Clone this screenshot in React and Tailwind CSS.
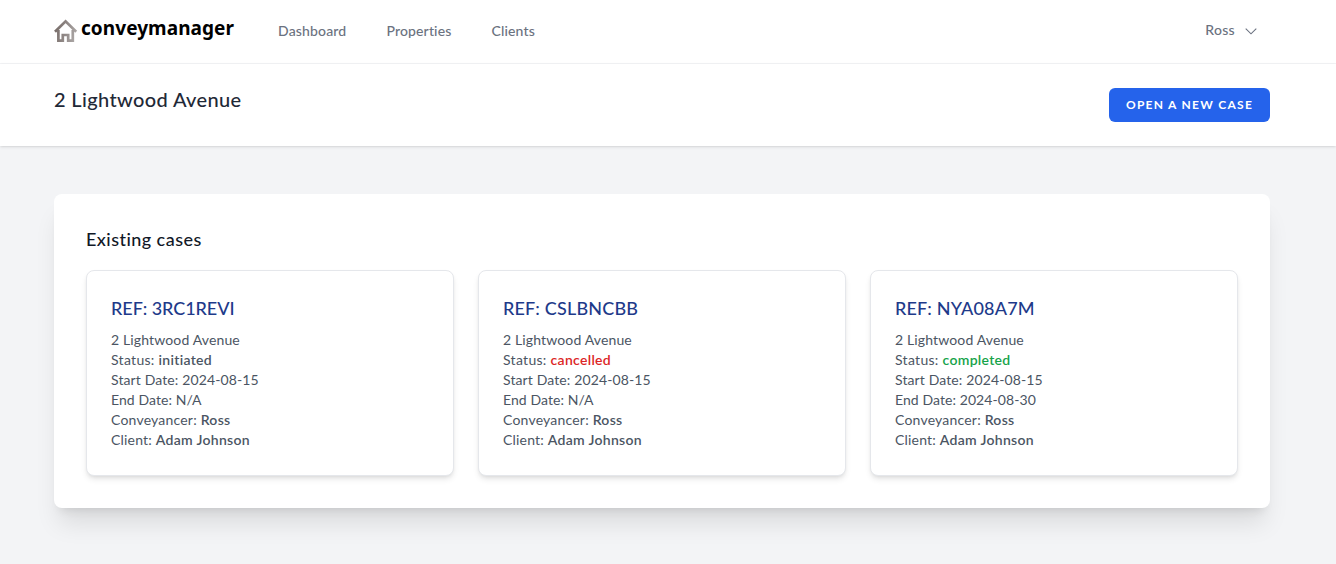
import React from "react";

const cases = [
  { ref: "3RC1REVI", refTracking: "tracking-[-0.04px]", status: "initiated", color: "", end: "N/A" },
  { ref: "CSLBNCBB", refTracking: "tracking-[0.19px]", status: "cancelled", color: "text-[#dc2626]", end: "N/A" },
  { ref: "NYA08A7M", refTracking: "tracking-[0.19px]", status: "completed", color: "text-[#16a34a]", end: "2024-08-30" },
];

function HouseLogo() {
  return (
    <svg className="mt-[5px] h-[24px] w-[24px] shrink-0" viewBox="0 0 24 24" fill="none" strokeWidth="2.7">
      <defs>
        <linearGradient id="house" x1="0" y1="0" x2="24" y2="6" gradientUnits="userSpaceOnUse">
          <stop offset="0" stopColor="#6f635f" />
          <stop offset="1" stopColor="#aaa5a4" />
        </linearGradient>
      </defs>
      <path d="M1 12.8 11.6 2.4 22.2 12.8" stroke="url(#house)" />
      <path d="M4.4 11v10.6h4.4V16h5.4v5.6h4.6V11" stroke="url(#house)" />
    </svg>
  );
}

function Value({ children, className = "" }) {
  return <span className={"font-semibold tracking-[0.3px] " + className}>{children}</span>;
}

function CaseCard({ item }) {
  return (
    <article className="rounded-lg border border-[#e5e7eb] bg-white px-6 pt-[23px] pb-[25px] shadow-[0_4px_6px_-1px_rgba(0,0,0,0.1),0_2px_4px_-2px_rgba(0,0,0,0.1)]">
      <h4 className={"mb-2 text-lg font-medium text-[#1e3a8a] " + item.refTracking}>REF: {item.ref}</h4>
      <div className="text-sm tracking-[0.14px] text-[#4b5563]">
        <p>2 Lightwood Avenue</p>
        <p><span className="tracking-[0.3px]">Status: </span><Value className={item.color}>{item.status}</Value></p>
        <p className="tracking-[0.12px]">Start Date: 2024-08-15</p>
        <p className="tracking-[0.08px]">End Date: {item.end}</p>
        <p><span className="tracking-[0.2px]">Conveyancer: </span><Value>Ross</Value></p>
        <p><span className="tracking-[0.2px]">Client: </span><Value>Adam Johnson</Value></p>
      </div>
    </article>
  );
}

export default function App() {
  return (
    <div className="h-[564px] overflow-hidden bg-[#f3f4f6] font-['Lato','Liberation_Sans',sans-serif] text-[#111827]">
      <nav className="h-16 border-b border-[#f3f4f6] bg-white pr-[66px] pl-[54px]">
        <div className="flex h-full items-center">
          <a className="flex h-[36px] items-start" href="#">
            <HouseLogo />
            <span className="ml-[3px] font-['Noto_Sans',sans-serif] text-[19px] leading-[28px] font-bold tracking-[0.07px] text-black">conveymanager</span>
          </a>
          <div className="ml-[44px] flex gap-10 pb-0.5 text-sm font-medium tracking-[0.15px] text-[#6b7280]">
            <a href="#">Dashboard</a>
            <a href="#">Properties</a>
            <a href="#">Clients</a>
          </div>
          <button className="mr-[11px] ml-auto flex items-center gap-2 text-sm font-medium tracking-[0.3px] text-[#6b7280]">
            <span className="pb-[3px]">Ross</span>
            <svg className="h-4 w-4" viewBox="0 0 16 16" fill="none" stroke="currentColor" strokeWidth="1.1">
              <path d="M2.7 4.6 8 9.8l5.3-5.2" />
            </svg>
          </button>
        </div>
      </nav>
      <header className="bg-white py-6 pr-[66px] pl-[54px] shadow-[0_1px_3px_rgba(0,0,0,0.1),0_1px_2px_-1px_rgba(0,0,0,0.1)]">
        <div className="flex items-start justify-between">
          <h2 className="text-xl leading-[23px] font-medium tracking-[0.36px] text-[#1f2937]">2 Lightwood Avenue</h2>
          <button className="h-[34px] w-[161px] rounded-md bg-[#2563eb] text-xs font-bold tracking-[1.28px] whitespace-nowrap text-white">OPEN A NEW CASE</button>
        </div>
      </header>
      <main className="py-12 pr-[66px] pl-[54px]">
        <section className="rounded-lg bg-white px-8 pt-[31px] pb-8 shadow-[0_20px_25px_-5px_rgba(0,0,0,0.1),0_8px_10px_-6px_rgba(0,0,0,0.1)]">
          <h3 className="mb-[17px] text-lg font-medium tracking-[0.45px]">Existing cases</h3>
          <div className="grid grid-cols-3 gap-6">
            {cases.map((item) => <CaseCard key={item.ref} item={item} />)}
          </div>
        </section>
      </main>
    </div>
  );
}
